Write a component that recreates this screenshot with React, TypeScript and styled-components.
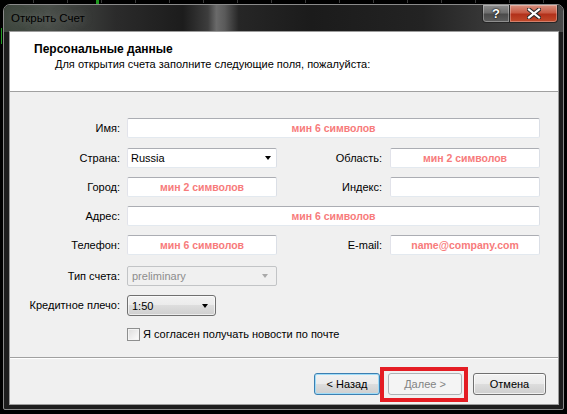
import React from 'react';
import styled, { createGlobalStyle, css } from 'styled-components';

const GlobalStyle = createGlobalStyle`
  html, body {
    margin: 0;
    padding: 0;
    background: #000;
  }
  body {
    font-family: 'Liberation Sans', Arial, sans-serif;
    font-size: 11px;
    color: #000;
  }
  * {
    box-sizing: border-box;
  }
`;

const Screen = styled.div`
  width: 567px;
  height: 414px;
  overflow: hidden;
  padding: 4px 0 0 3px;
  background-color: #000;
  background-image: linear-gradient(#1f9a1f, #1f9a1f),
    linear-gradient(90deg, #1f9a1f, #1f9a1f),
    repeating-linear-gradient(90deg, transparent 0 33px, #3b3b3b 33px 34px);
  background-size: 1px 16px, 3px 4px, 100% 3px;
  background-position: 1px 28px, 96px 0, 0 0;
  background-repeat: no-repeat;
`;

const Window = styled.div`
  width: 561px;
  height: 406px;
  display: flex;
  flex-direction: column;
  border: 1px solid #8a8a8a;
  border-radius: 7px 7px 2px 2px;
  background: #1d1d1d;
  overflow: hidden;
`;

const TitleBar = styled.div`
  height: 27px;
  display: flex;
  justify-content: space-between;
  align-items: flex-start;
  background: linear-gradient(
    90deg,
    #3d463d 0%,
    #4a4f4a 8%,
    #2b2b2b 20%,
    #1c1c1c 32%,
    #3d3d3d 36.5%,
    #6a6a6a 38%,
    #5a5a5a 39.5%,
    #262626 42%,
    #1b1b1b 55%,
    #232323 75%,
    #3a3a3a 88%,
    #4a4a4a 100%
  );
`;

const Title = styled.div`
  padding: 6px 0 0 7px;
  font-size: 11.5px;
  line-height: 14px;
  color: #000;
  text-shadow: 0 0 8px rgba(170, 170, 170, 0.55);
`;

const CaptionButtons = styled.div`
  display: flex;
  margin-right: 5px;
`;

const CaptionButton = styled.div<{ $close?: boolean }>`
  width: ${(p) => (p.$close ? 48 : 28)}px;
  height: 18px;
  display: flex;
  align-items: center;
  justify-content: center;
  border: 1px solid #262626;
  border-top: none;
  box-shadow: inset 0 0 0 1px rgba(255, 255, 255, 0.3);
  color: #fff;
  font-weight: bold;
  font-size: 13px;
  text-shadow: 0 0 2px #000, 0 0 1px #000;
  ${(p) =>
    p.$close
      ? css`
          border-radius: 0 0 4px 0;
          border-left: none;
          background: linear-gradient(#d8917f 0%, #c85a44 45%, #b2311a 55%, #c24b2c 100%);
        `
      : css`
          border-radius: 0 0 0 4px;
          background: linear-gradient(#8e8e8e 0%, #6e6e6e 45%, #4b4b4b 55%, #5e5e5e 100%);
        `}
`;

const FrameBody = styled.div`
  flex: 1;
  display: flex;
  padding: 0 5px 5px 6px;
`;

const Client = styled.div`
  flex: 1;
  display: flex;
  flex-direction: column;
  background: #f0f0f0;
  box-shadow: 0 0 0 1px #9c9c9c;
`;

const Header = styled.div`
  height: 60px;
  background: #fff;
  border-bottom: 1px solid #a0a0a0;
  padding: 10px 0 0 24px;
`;

const HeaderTitle = styled.div`
  font-weight: bold;
  font-size: 12px;
  line-height: 14px;
`;

const HeaderText = styled.div`
  font-size: 11px;
  line-height: 13px;
  margin: 2px 0 0 21px;
`;

const Form = styled.div`
  flex: 1;
  display: grid;
  grid-template-columns: 117px 150px 113px 150px;
  grid-template-rows: 30px 29px 29px 29px 31px 29px 32px auto;
  align-items: start;
  padding-top: 26px;
`;

const Label = styled.div<{ $right?: boolean }>`
  text-align: right;
  line-height: 20px;
  padding-right: ${(p) => (p.$right ? 8 : 7)}px;
  white-space: nowrap;
  color: #000;
`;

const TextBox = styled.input<{ $wide?: boolean }>`
  display: block;
  width: 100%;
  height: 20px;
  margin: 0;
  padding: 0 2px;
  border: 1px solid;
  border-color: #abadb3 #dbdfe6 #e3e9ef #e2e3ea;
  border-radius: 2px;
  background: #fff;
  font: bold 10.5px 'Liberation Sans', Arial, sans-serif;
  color: #000;
  text-align: center;
  outline: none;
  ${(p) =>
    p.$wide &&
    css`
      grid-column: span 3;
    `}
  &::placeholder {
    color: #f77b7b;
    opacity: 1;
  }
`;

const Arrow = styled.span<{ $muted?: boolean }>`
  width: 0;
  height: 0;
  border-left: 3.5px solid transparent;
  border-right: 3.5px solid transparent;
  border-top: 4px solid ${(p) => (p.$muted ? '#a9a9a9' : '#000')};
`;

const ComboBox = styled.div<{ $disabled?: boolean }>`
  height: 20px;
  display: flex;
  align-items: center;
  justify-content: space-between;
  padding: 0 5px 0 3px;
  border: 1px solid;
  border-radius: 2px;
  ${(p) =>
    p.$disabled
      ? css`
          border-color: #c2c4c6;
          background: #f0f0f0;
          color: #8d8d8d;
          padding-left: 4px;
          padding-right: 8px;
        `
      : css`
          border-color: #abadb3 #dbdfe6 #e3e9ef #e2e3ea;
          background: #fff;
        `}
`;

const DropDown = styled.div`
  width: 89px;
  height: 21px;
  display: flex;
  align-items: center;
  justify-content: space-between;
  padding: 0 7px 0 4px;
  border: 1px solid #707070;
  border-radius: 3px;
  background: linear-gradient(#f2f2f2 0%, #ebebeb 50%, #dddddd 50%, #cfcfcf 100%);
  box-shadow: inset 0 0 0 1px rgba(255, 255, 255, 0.6);
`;

const CheckRow = styled.label`
  grid-column: 2 / span 3;
  display: flex;
  align-items: center;
  gap: 3px;
  line-height: 14px;
`;

const CheckBox = styled.span`
  width: 13px;
  height: 13px;
  border: 1px solid #8e8f8f;
  background: linear-gradient(135deg, #dcdcdc, #fdfdfd);
  box-shadow: inset 0 0 0 1px #f4f4f4;
`;

const Footer = styled.div`
  height: 47px;
  border-top: 1px solid #a0a0a0;
  box-shadow: inset 0 1px 0 #fff;
  display: flex;
  justify-content: flex-end;
  align-items: flex-start;
  padding: 15px 12px 0 0;
`;

const Button = styled.div<{ $width: number; $variant?: 'default' | 'disabled' }>`
  width: ${(p) => p.$width}px;
  height: 22px;
  display: flex;
  align-items: center;
  justify-content: center;
  border: 1px solid #707070;
  border-radius: 3px;
  background: linear-gradient(#f2f2f2 0%, #ebebeb 50%, #dddddd 50%, #cfcfcf 100%);
  box-shadow: inset 0 0 0 1px rgba(255, 255, 255, 0.7);
  font-size: 11px;
  ${(p) =>
    p.$variant === 'default' &&
    css`
      border-color: #3c7fb1;
      box-shadow: inset 0 0 0 1px #9fdcf8;
    `}
  ${(p) =>
    p.$variant === 'disabled' &&
    css`
      border-color: #adb2b5;
      background: #f4f4f4;
      box-shadow: none;
      color: #838383;
    `}
`;

const Highlighted = styled.div`
  position: relative;
  margin: 0 11px 0 8px;
  &::after {
    content: '';
    position: absolute;
    top: -6px;
    left: -8px;
    right: -6px;
    bottom: -7px;
    border: 4px solid #e41c23;
  }
`;

const CloseIcon = () => (
  <svg width="14" height="11" viewBox="0 0 14 11">
    <path d="M2 1.5 L12 9.5 M12 1.5 L2 9.5" stroke="#2a2a2a" strokeWidth="4.2" strokeLinecap="square" />
    <path d="M2 1.5 L12 9.5 M12 1.5 L2 9.5" stroke="#fff" strokeWidth="2.2" strokeLinecap="square" />
  </svg>
);

const App = () => {
  return (
    <>
      <GlobalStyle />
      <Screen>
        <Window>
          <TitleBar>
            <Title>Открыть Счет</Title>
            <CaptionButtons>
              <CaptionButton>?</CaptionButton>
              <CaptionButton $close>
                <CloseIcon />
              </CaptionButton>
            </CaptionButtons>
          </TitleBar>
          <FrameBody>
            <Client>
              <Header>
                <HeaderTitle>Персональные данные</HeaderTitle>
                <HeaderText>Для открытия счета заполните следующие поля, пожалуйста:</HeaderText>
              </Header>
              <Form>
                <Label>Имя:</Label>
                <TextBox $wide placeholder="мин 6 символов" />

                <Label>Страна:</Label>
                <ComboBox>
                  <span>Russia</span>
                  <Arrow />
                </ComboBox>
                <Label $right>Область:</Label>
                <TextBox placeholder="мин 2 символов" />

                <Label>Город:</Label>
                <TextBox placeholder="мин 2 символов" />
                <Label $right>Индекс:</Label>
                <TextBox />

                <Label>Адрес:</Label>
                <TextBox $wide placeholder="мин 6 символов" />

                <Label>Телефон:</Label>
                <TextBox placeholder="мин 6 символов" />
                <Label $right>E-mail:</Label>
                <TextBox placeholder="name@company.com" />

                <Label>Тип счета:</Label>
                <ComboBox $disabled>
                  <span>preliminary</span>
                  <Arrow $muted />
                </ComboBox>
                <div />
                <div />

                <Label>Кредитное плечо:</Label>
                <DropDown>
                  <span>1:50</span>
                  <Arrow />
                </DropDown>
                <div />
                <div />

                <CheckRow>
                  <CheckBox />
                  <span>Я согласен получать новости по почте</span>
                </CheckRow>
              </Form>
              <Footer>
                <Button $width={66} $variant="default">
                  &lt; Назад
                </Button>
                <Highlighted>
                  <Button $width={74} $variant="disabled">
                    Далее &gt;
                  </Button>
                </Highlighted>
                <Button $width={73}>Отмена</Button>
              </Footer>
            </Client>
          </FrameBody>
        </Window>
      </Screen>
    </>
  );
};

export default App;
